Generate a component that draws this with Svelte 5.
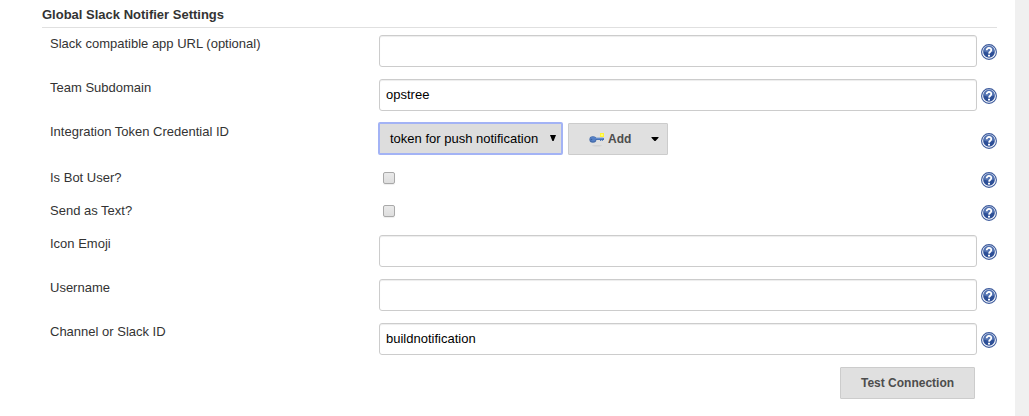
<script>
  const rows = [
    { label: 'Slack compatible app URL (optional)', type: 'text', value: '' },
    { label: 'Team Subdomain', type: 'text', value: 'opstree' },
    { label: 'Integration Token Credential ID', type: 'credential' },
    { label: 'Is Bot User?', type: 'check' },
    { label: 'Send as Text?', type: 'check' },
    { label: 'Icon Emoji', type: 'text', value: '' },
    { label: 'Username', type: 'text', value: '' },
    { label: 'Channel or Slack ID', type: 'text', value: 'buildnotification' }
  ];
</script>

<main>
  <section>
    <h2>Global Slack Notifier Settings</h2>
    <div class="rows">
      {#each rows as row}
        <div class="row {row.type}">
          <span class="label">{row.label}</span>
          <div class="control">
            {#if row.type === 'text'}
              <input class="field" type="text" value={row.value} aria-label={row.label} />
            {:else if row.type === 'check'}
              <input class="box" type="checkbox" aria-label={row.label} />
            {:else}
              <div class="select" role="combobox" aria-expanded="false" aria-controls="none" tabindex="0">
                <span>token for push notification</span>
                <svg class="arrow" width="6" height="6" viewBox="0 0 6 6"><path d="M0 0h6L3.6 6H2.4z" fill="#000" /></svg>
              </div>
              <button class="add">
                <svg class="key" width="16" height="16" viewBox="0 0 16 16">
                  <ellipse cx="8" cy="14.7" rx="5" ry=".7" fill="#d0d0d0" />
                  <path d="M6 6.8h8.4l.6.8v1.3h-1.2v1h-1v-.8h-.9v.8H11v-.8H6z" fill="#4673b9" />
                  <ellipse cx="3.9" cy="8.5" rx="3.5" ry="3.2" fill="#4369a8" />
                  <ellipse cx="4" cy="8.1" rx="2.8" ry="2.3" fill="#5580c6" />
                  <circle cx="2.5" cy="8.5" r=".8" fill="#3c609d" />
                  <path d="M6.5 7.4h7.5" stroke="#7097d4" stroke-width=".8" />
                  <path d="M11 2h4v4h-4z" fill="#fff533" />
                  <path d="M12 3h2v2h-2z" fill="#fffa70" />
                </svg>
                <span>Add</span>
                <svg class="caret" width="8" height="4" viewBox="0 0 8 4"><path d="M.5 0h7v.8L4.5 4h-1L.5.8z" fill="#000" /></svg>
              </button>
            {/if}
          </div>
          <svg class="help" width="16" height="16" viewBox="0 0 16 16">
            <circle cx="8" cy="8" r="7.4" fill="#fff" stroke="#3c5a9c" stroke-width="1.1" />
            <circle cx="8" cy="8" r="5.8" fill="#2d4f97" />
            <path d="M2.4 7.2a5.6 5.6 0 0 1 11.2 0Q8 9.8 2.4 7.2z" fill="#5373b2" />
            <path d="M5.7 6.3C5.6 3.2 10.4 3.2 10.3 6c0 1.6-2.2 1.8-2.3 3.6" fill="none" stroke="#fff" stroke-width="1.8" />
            <path d="M7 10.7h2v1.8H7z" fill="#fff" />
          </svg>
        </div>
      {/each}
    </div>
    <div class="actions"><button>Test Connection</button></div>
  </section>
  <aside></aside>
</main>

<style>
  :global(body) { background: #fff; overflow: hidden; }
  * { box-sizing: border-box; }
  main {
    display: flex;
    justify-content: space-between;
    height: 416px;
    font: 13px/18px "Liberation Sans", Arial, sans-serif;
    color: #333;
  }
  section { width: 956px; margin-left: 42px; }
  aside { width: 14px; background: #f0f0f0; }
  h2 {
    width: 955px;
    height: 28px;
    margin: 0;
    padding-top: 6px;
    border-bottom: 1px solid #e0e0e0;
    font-size: 13px;
    line-height: 18px;
  }
  .rows { padding-top: 7px; }
  .row {
    display: grid;
    grid-template-columns: 329px 598px 16px;
    align-items: start;
    height: 44px;
    padding-left: 8px;
  }
  .help { margin: 9px 0 0 4px; }
  .credential { height: 46px; }
  .credential .help { margin-top: 10px; }
  .check { height: 33px; }
  .check .help { margin-top: 3px; }
  .control { display: flex; align-items: flex-start; }
  .field {
    width: 598px;
    height: 32px;
    margin: 0;
    padding: 0 6px 2px;
    border: 1px solid #ccc;
    border-radius: 3px;
    outline: none;
    box-shadow: inset 0 1px 1px rgba(0, 0, 0, .075);
    background: #fff;
    color: #000;
    font: inherit;
  }
  .box {
    appearance: none;
    width: 12px;
    height: 12px;
    margin: 3px 0 0 4px;
    border: 1px solid #a9a9a9;
    border-radius: 2px;
    background: linear-gradient(#eaeaea, #dedede);
    box-shadow: 0 1px 1px #eee;
  }
  .select {
    display: flex;
    align-items: center;
    justify-content: space-between;
    width: 185px;
    height: 33px;
    margin: -1px 5px 0 -1px;
    padding: 0 5px 0 10px;
    border: 2px solid #a3b3f5;
    border-radius: 2px;
    outline: none;
    background: #ddd;
    color: #000;
  }
  .arrow { margin-bottom: 2px; }
  button {
    height: 32px;
    padding: 0;
    border: 1px solid #ccc;
    border-radius: 1px;
    background: #e0e0e0;
    color: #4d4d4d;
    font: bold 12px/18px "Liberation Sans", Arial, sans-serif;
  }
  .add { display: flex; align-items: center; width: 100px; padding-left: 20px; }
  .key { margin-right: 3px; }
  .caret { margin-left: 19.5px; }
  .actions { display: flex; justify-content: flex-end; width: 933px; }
  .actions button { width: 135px; }
</style>
